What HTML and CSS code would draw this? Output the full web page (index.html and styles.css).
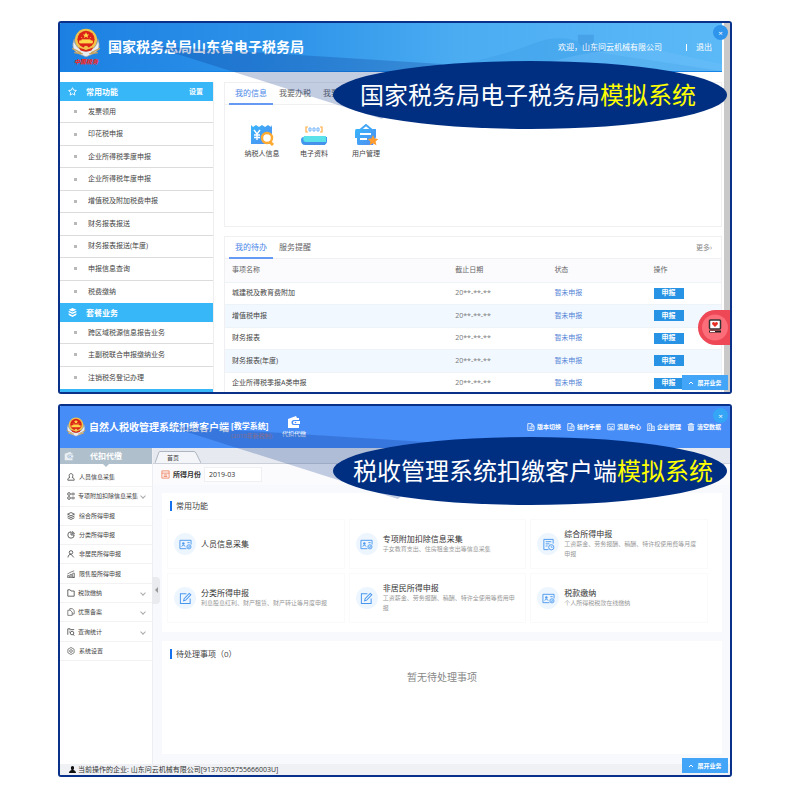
FILE: index.html
```html
<!DOCTYPE html>
<html lang="zh-CN">
<head>
<meta charset="utf-8">
<title>电子税务局模拟系统</title>
<link rel="stylesheet" href="styles.css">
</head>
<body>
<svg class="defs" aria-hidden="true">
  <symbol id="emblem" viewBox="0 0 28 28">
    <path d="M3 10Q-1 20 7 24L14 27 21 24Q29 20 25 10Q25 19 14 22Q3 19 3 10Z" fill="#e9ecf0" stroke="#8a93a0" stroke-width=".7"/>
    <path d="M1 19l8 4M27 19l-8 4M3 23l8 1M25 23l-8 1" stroke="#c8a35c" stroke-width="1.3"/>
    <circle cx="14" cy="11" r="10.300" fill="#f1c34b"/>
    <circle cx="14" cy="10.500" r="8" fill="#dc2318"/>
    <path d="M14 4l1 2h2l-1.600 1.400.6 2-2-1.200-2 1.200.6-2L11 6h2z" fill="#ffd84a"/>
    <path d="M8 14v-2h2v-1h8v1h2v2zM9.500 8.500l1 1M18.500 8.500l-1 1" fill="#ffd84a" stroke="#ffd84a" stroke-width=".7"/>
    <path d="M7 18q7 4 14 0l-2 3q-5 2-10 0z" fill="#d92a1b"/>
    <circle cx="14" cy="18.500" r="2" fill="#f1c34b"/>
  </symbol>
  <symbol id="wallet" viewBox="0 0 14 14"><path d="M1 4l8-3 1 2h2v2H7a2.500 2.500 0 0 0 0 5h5v3H1z" fill="currentColor"/><path d="M7.500 6H13v3H7.500a1.500 1.500 0 0 1 0-3z" fill="currentColor"/><circle cx="8.500" cy="7.500" r=".8" fill="#4a8df5"/></symbol>
  <symbol id="doc" viewBox="0 0 10 10"><path d="M1 .8h5L8.800 3.500v5.700H1zM6 1v3h2.500M3 5h4M3 7h4" fill="none" stroke="currentColor"/></symbol>
  <symbol id="mail" viewBox="0 0 10 10"><path d="M1 1.500h8v7H1zM2.500 4L5 5.500 7.500 4M3 7h4" fill="none" stroke="currentColor"/></symbol>
  <symbol id="building" viewBox="0 0 10 10"><path d="M1 9.200V1h4.500v8.200M5.500 4H9v5.200M0 9.200h10M2.500 3H4M2.500 5H4M2.500 7H4M7.200 5.500v2" fill="none" stroke="currentColor"/></symbol>
  <symbol id="trash" viewBox="0 0 10 10"><path d="M.8 2h8.400M3.300 2V.7h3.400V2M2 3.500v5.700h6V3.500z" fill="none" stroke="currentColor"/><path d="M2.500 4h5v5h-5z" fill="currentColor" opacity=".6"/></symbol>
  <symbol id="user" viewBox="0 0 10 10"><path d="M5 .8c3 0 2.700 3.700 1.200 4.700C9 6.500 9 7 9 9H1c0-2 0-2.500 2.800-3.500C2.300 4.500 2 .8 5 .8z" fill="none" stroke="currentColor"/></symbol>
  <symbol id="items" viewBox="0 0 10 10"><circle cx="2.500" cy="2.500" r="1.700" fill="none" stroke="currentColor"/><circle cx="2.500" cy="7.500" r="1.700" fill="none" stroke="currentColor"/><path d="M6 1.500h3v2H6zM6 6.500h3v2H6z" fill="none" stroke="currentColor" stroke-width=".8"/></symbol>
  <symbol id="layers" viewBox="0 0 10 10"><path d="M5 .7l4.300 2L5 4.800.7 2.700zM.7 5L5 7l4.300-2M.7 7.200L5 9.300l4.300-2.100" fill="none" stroke="currentColor"/></symbol>
  <symbol id="pie" viewBox="0 0 10 10"><path d="M5 1a4 4 0 1 0 4 4H5zM6.500.8A3.500 3.500 0 0 1 9.200 3.600H6.500z" fill="none" stroke="currentColor"/></symbol>
  <symbol id="person" viewBox="0 0 10 10"><circle cx="5" cy="3" r="2.200" fill="none" stroke="currentColor"/><path d="M1.200 9.300C1.500 6.500 3 5.300 5 5.300L8.500 9.300" fill="none" stroke="currentColor"/></symbol>
  <symbol id="chart" viewBox="0 0 10 10"><path d="M.8 9.200V7h2v2.200M4 9.200V5.500h2v3.700M7.200 9.200V4h2v5.200zM.5 5L5 2.500 9 1M.5 9.300h9" fill="none" stroke="currentColor" stroke-width=".8"/></symbol>
  <symbol id="folder" viewBox="0 0 10 10"><path d="M1 2.500V1h3l1 1.500h4V9H1z" fill="none" stroke="currentColor"/></symbol>
  <symbol id="copy" viewBox="0 0 10 10"><path d="M3.500 2.500V.8h3L9 3v4.500H6.500M1 2.800h3L6.500 5v4.200H1z" fill="none" stroke="currentColor" stroke-width=".8"/></symbol>
  <symbol id="search" viewBox="0 0 10 10"><path d="M1 8.500V1h3v2M2.500 5h1M7.500 8L9.300 9.500M5 2h4" fill="none" stroke="currentColor"/><circle cx="6.300" cy="6.300" r="2.200" fill="none" stroke="currentColor"/></symbol>
  <symbol id="gear" viewBox="0 0 10 10"><path d="M5 .6l3.900 2.200v4.400L5 9.400 1.100 7.200V2.800z" fill="none" stroke="currentColor" stroke-width=".8"/><circle cx="5" cy="5" r="1.700" fill="none" stroke="currentColor" stroke-width=".8"/></symbol>
  <symbol id="idcard" viewBox="0 0 14 14"><path d="M13 7V2.500H1v9h7M3 9.300c0-2 3.500-2 3.500 0M9 5h2.500" fill="none" stroke="currentColor"/><circle cx="4.700" cy="6" r="1.300" fill="currentColor"/><circle cx="10.700" cy="9.500" r="2.300" fill="#b9dcff" stroke="currentColor" stroke-width=".8"/><path d="M9.700 9.500l.8.8 1.300-1.500" fill="none" stroke="currentColor" stroke-width=".7"/></symbol>
  <symbol id="edit" viewBox="0 0 14 14"><path d="M8 2H1.500v10.500H12V7M5 9.500l.5-2.300L11 1.500 12.700 3 7.200 8.800z" fill="none" stroke="currentColor" stroke-width="1.100"/></symbol>
  <symbol id="report" viewBox="0 0 14 14"><path d="M12 6V1.500H2v11h5M4 4h6M4 6.300h4M4 8.600h2" fill="none" stroke="currentColor"/><circle cx="10" cy="10" r="2.800" fill="none" stroke="currentColor"/><path d="M10 8.500V10h1.500" fill="none" stroke="currentColor" stroke-width=".8"/></symbol>
</svg>

<main class="page">
<section class="window portal">
  <header class="portal-head">
    <svg class="scenery" viewBox="0 0 300 49" preserveAspectRatio="none" aria-hidden="true">
      <path d="M0 49Q75 36 110 21Q135 11 155 19L176 30 300 49Z" fill="#3f9fe9" opacity=".45"/>
      <path d="M100 49Q150 29 220 24L300 42V49Z" fill="#77c5fa" opacity=".3"/>
      <path d="M155 19V12h16v11l12 6h-20z" fill="#3c92dc" opacity=".5"/>
    </svg>
    <div class="logo">
      <svg class="emblem"><use href="#emblem"/></svg>
      <span class="logo-name">中国税务</span>
    </div>
    <h1>国家税务总局山东省电子税务局</h1>
    <p class="welcome">欢迎，山东问云机械有限公司</p>
    <a class="logout" href="#">退出</a>
  </header>

  <div class="portal-body">
    <nav class="side">
      <h2><svg viewBox="0 0 10 10"><path d="M5 .8l1.300 2.700 3 .4L7.100 6l.5 3L5 7.500 2.400 9l.5-3L.7 3.900l3-.4z" fill="none" stroke="currentColor"/></svg>常用功能<a href="#">设置</a></h2>
      <ul class="side-list">
        <li><a href="#">发票领用</a></li>
        <li><a href="#">印花税申报</a></li>
        <li><a href="#">企业所得税季度申报</a></li>
        <li><a href="#">企业所得税年度申报</a></li>
        <li><a href="#">增值税及附加税费申报</a></li>
        <li><a href="#">财务报表报送</a></li>
        <li><a href="#">财务报表报送(年度)</a></li>
        <li><a href="#">申报信息查询</a></li>
        <li><a href="#">税费缴纳</a></li>
      </ul>
      <h2><svg viewBox="0 0 10 10"><path d="M5 0l4.300 2L5 4 .7 2zM.7 3L5 5l4.300-2v1.600L5 6.800.7 4.600zM.7 5.700L5 8l4.300-2.300v2L5 10 .7 7.700z" fill="currentColor"/></svg>套餐业务</h2>
      <ul class="side-list short">
        <li><a href="#">跨区域税源信息报告业务</a></li>
        <li><a href="#">主副税联合申报缴纳业务</a></li>
        <li><a href="#">注销税务登记办理</a></li>
      </ul>
      <div class="side-end"></div>
    </nav>

    <div class="content">
      <section class="card info">
        <div class="tabs">
          <button class="tab active">我的信息</button>
          <button class="tab">我要办税</button>
          <button class="tab">我要查询</button>
        </div>
        <div class="shortcuts">
          <a href="#"><svg viewBox="0 0 26 22"><defs><linearGradient id="blue" x2="1" y2="1"><stop stop-color="#37b5fb"/><stop offset="1" stop-color="#528cef"/></linearGradient></defs><path d="M2 1l2 2 3-2 3 2 3-2 3 2 3-2 3 2 1-2v19H2z" fill="url(#blue)"/><path d="M5 6l3 4 3-4M8 10v6M5 11h6M5 13.500h6" fill="none" stroke="#fff" stroke-width="1.400"/><circle cx="18" cy="14" r="5" fill="#fff" stroke="#ffab32" stroke-width="2.500"/><path d="M21 18l3 3" stroke="#ffab32" stroke-width="3"/></svg>纳税人信息</a>
          <a href="#"><svg viewBox="0 0 26 22"><path d="M7 3H5v5h2M19 3h2v5h-2" fill="none" stroke="#ffae43" stroke-width="1.200"/><path d="M8 4h2v3H8zM12 4h2v3h-2zM16 4h2v3h-2z" fill="none" stroke="#73b5fa"/><path d="M3 13q-3 0-3 3 0 5 4 5h19q3-1 3-4v-4z" fill="#4099ed"/><path d="M3 12h22v6H4q-3-2-1-6z" fill="#5be1e9"/><path d="M2 18h22v3H5z" fill="#4592ec"/></svg>电子资料</a>
          <a href="#"><svg viewBox="0 0 26 22"><path d="M7 6l6-5 6 5" fill="none" stroke="#46a7f6" stroke-width="2"/><path d="M3 5h20v8l-3 8H5q-1 0-1-2v-5H2V8q0-3 1-3z" fill="url(#blue)"/><path d="M7 10h11M7 15h7" stroke="#fff" stroke-width="1.800"/><path d="M20 11l1.600 3.500 3.800.4-2.800 2.500.8 3.800-3.400-2-3.400 2 .8-3.800-2.800-2.500 3.800-.4z" fill="#ff9c2d"/></svg>用户管理</a>
        </div>
      </section>

      <section class="card todo">
        <div class="tabs">
          <button class="tab active">我的待办</button>
          <button class="tab">服务提醒</button>
          <a class="more" href="#">更多›</a>
        </div>
        <table>
          <thead><tr><th class="wide">事项名称</th><th class="mid">截止日期</th><th class="mid">状态</th><th>操作</th></tr></thead>
          <tbody>
            <tr><td>城建税及教育费附加</td><td class="date">20**-**-**</td><td class="state">暂未申报</td><td><button class="file-btn">申报</button></td></tr>
            <tr><td>增值税申报</td><td class="date">20**-**-**</td><td class="state">暂未申报</td><td><button class="file-btn">申报</button></td></tr>
            <tr><td>财务报表</td><td class="date">20**-**-**</td><td class="state">暂未申报</td><td><button class="file-btn">申报</button></td></tr>
            <tr><td>财务报表(年度)</td><td class="date">20**-**-**</td><td class="state">暂未申报</td><td><button class="file-btn">申报</button></td></tr>
            <tr><td>企业所得税季报A类申报</td><td class="date">20**-**-**</td><td class="state">暂未申报</td><td><button class="file-btn">申报</button></td></tr>
          </tbody>
        </table>
      </section>
    </div>
  </div>
  <div class="scrollbar"></div>
  <svg class="beam" viewBox="0 0 300 90" aria-hidden="true"><path d="M0 2L290 20 230 75Z"/></svg>
  <p class="callout">国家税务局电子税务局<em>模拟系统</em></p>
  <button class="close" aria-label="关闭">×</button>
  <button class="service" aria-label="客服"><svg viewBox="0 0 32 35"><circle cx="17" cy="17.500" r="13" fill="#fb6d79"/><rect x="11.500" y="10" width="11" height="9" rx="1" fill="#fff" stroke="#333" stroke-width="1.500"/><path d="M17 17l-3-3q0-2 1.500-2 1 0 1.500 1 .5-1 1.500-1Q20 12 20 14z" fill="#e62f24"/><path d="M11 21.500h12" stroke="#222" stroke-width="2"/><path d="M12 21.500h5" stroke="#fff"/></svg></button>
  <button class="expand"><svg viewBox="0 0 6 6"><path d="M1 4l2-2 2 2" fill="none" stroke="currentColor"/></svg>展开业务</button>
</section>

<section class="window client">
  <header class="client-head">
    <svg class="emblem small"><use href="#emblem"/></svg>
    <h1>自然人税收管理系统扣缴客户端</h1>
    <div class="edition"><strong>[教学系统]</strong><span>(2019年新税制)</span></div>
    <a class="module" href="#"><svg><use href="#wallet"/></svg>代扣代缴</a>
    <nav class="tools">
      <a href="#"><svg><use href="#doc"/></svg>版本切换</a>
      <a href="#"><svg><use href="#doc"/></svg>操作手册</a>
      <a href="#"><svg><use href="#mail"/></svg>消息中心</a>
      <a href="#"><svg><use href="#building"/></svg>企业管理</a>
      <a href="#"><svg><use href="#trash"/></svg>清空数据</a>
    </nav>
  </header>

  <div class="client-body">
    <nav class="menu">
      <h2><svg><use href="#wallet"/></svg><span>代扣代缴</span></h2>
      <ul>
        <li><a href="#"><svg><use href="#user"/></svg>人员信息采集</a></li>
        <li><a href="#" class="sub"><svg><use href="#items"/></svg>专项附加扣除信息采集</a></li>
        <li><a href="#"><svg><use href="#layers"/></svg>综合所得申报</a></li>
        <li><a href="#"><svg><use href="#pie"/></svg>分类所得申报</a></li>
        <li><a href="#"><svg><use href="#person"/></svg>非居民所得申报</a></li>
        <li><a href="#"><svg><use href="#chart"/></svg>限售股所得申报</a></li>
        <li><a href="#" class="sub"><svg><use href="#folder"/></svg>税款缴纳</a></li>
        <li><a href="#" class="sub"><svg><use href="#copy"/></svg>优惠备案</a></li>
        <li><a href="#" class="sub"><svg><use href="#search"/></svg>查询统计</a></li>
        <li><a href="#"><svg><use href="#gear"/></svg>系统设置</a></li>
      </ul>
      <button class="collapse" aria-label="收起菜单"></button>
    </nav>

    <div class="workspace">
      <div class="tabstrip">
        <svg class="tab-shape" viewBox="0 0 46 12" preserveAspectRatio="none" aria-hidden="true"><path d="M0 12L4 1Q4 .5 5 .5H39Q40 .5 41 2L46 12" fill="#f3f5f8" stroke="#aeb6c1"/></svg>
        <a href="#">首页</a>
      </div>
      <div class="period">
        <svg viewBox="0 0 10 10"><path d="M1 1h8v8H1zM1 3.500h8M3 5.500h4M3 7.200h4" fill="none" stroke="#ef8664"/></svg>
        <label for="month">所得月份</label>
        <input id="month" value="2019-03">
      </div>
      <div class="panels">
        <section class="panel functions">
          <h3>常用功能</h3>
          <div class="grid">
            <a href="#"><i><svg><use href="#idcard"/></svg></i><span><b>人员信息采集</b></span></a>
            <a href="#"><i><svg><use href="#idcard"/></svg></i><span><b>专项附加扣除信息采集</b><small>子女教育支出、住房租金支出等信息采集</small></span></a>
            <a href="#"><i><svg><use href="#report"/></svg></i><span><b>综合所得申报</b><small>工资薪金、劳务报酬、稿酬、特许权使用费等月度申报</small></span></a>
            <a href="#"><i><svg><use href="#edit"/></svg></i><span><b>分类所得申报</b><small>利息股息红利、财产租赁、财产转让等月度申报</small></span></a>
            <a href="#"><i><svg><use href="#edit"/></svg></i><span><b>非居民所得申报</b><small>工资薪金、劳务报酬、稿酬、特许全使用等费用申报</small></span></a>
            <a href="#"><i><svg><use href="#idcard"/></svg></i><span><b>税款缴纳</b><small>个人所得税税款在线缴纳</small></span></a>
          </div>
        </section>
        <section class="panel pending">
          <h3>待处理事项（0）</h3>
          <p>暂无待处理事项</p>
        </section>
      </div>
    </div>
  </div>
  <footer><svg viewBox="0 0 8 8"><path d="M4 0c2.500 0 2 3.500 1 4.500C7 5.300 8 6 8 8H0c0-2 1-2.700 3-3.500C2 3.500 1.500 0 4 0z" fill="#111"/></svg>当前操作的企业: 山东问云机械有限公司[91370305755666003U]</footer>
  <svg class="beam" viewBox="0 0 300 90" aria-hidden="true"><path d="M0 2L290 20 230 75Z"/></svg>
  <p class="callout">税收管理系统扣缴客户端<em>模拟系统</em></p>
  <button class="close" aria-label="关闭">×</button>
  <button class="expand"><svg viewBox="0 0 6 6"><path d="M1 4l2-2 2 2" fill="none" stroke="currentColor"/></svg>展开业务</button>
</section>
</main>
</body>
</html>
```
FILE: styles.css
```css
* { box-sizing: border-box; }
body, h1, h2, h3, p, ul { margin: 0; padding: 0; }
body {
  background: #fff;
  color: #444;
  font: 7px/10px "Open Sans", "Noto Sans CJK SC", sans-serif;
}
ul { list-style: none; }
a { color: inherit; text-decoration: none; }
button, input { font: inherit; color: inherit; border: 0; padding: 0; background: none; }
svg { flex: none; }
.defs { position: absolute; width: 0; height: 0; }

.page {
  display: flex;
  flex-direction: column;
  gap: 10px;
  padding: 21px 58px;
}
.window {
  position: relative;
  border: 2px solid #09318a;
  border-radius: 3px;
  overflow: hidden;
  background: #fff;
}
.emblem { width: 30px; height: 30px; }

/* portal */
.portal { padding-right: 8px; }
.portal-head {
  position: relative;
  display: flex;
  align-items: center;
  min-height: 49px;
  padding: 0 10px 0 11px;
  border-bottom: 1px solid #1684e6;
  background: linear-gradient(90deg, #1b80e2 0%, #2e94e9 35%, #4bacf2 60%, #5bb9f7 100%);
  color: #fff;
}
.scenery { position: absolute; right: 0; top: 0; width: 45%; height: 100%; }
.logo {
  display: flex;
  flex-direction: column;
  align-items: center;
  width: 30px;
  margin-right: 7px;
}
.logo-name {
  color: #ed2b28;
  font-size: 6px;
  line-height: 8px;
  font-weight: 900;
  font-style: italic;
}
.portal-head h1 { font-size: 14px; line-height: 20px; font-weight: 700; }
.welcome { position: relative; margin-left: auto; font-size: 8px; }
.logout {
  position: relative;
  margin-left: 24px;
  padding-left: 10px;
  font-size: 8px;
}
.logout::before {
  content: "";
  position: absolute;
  left: 0;
  top: 2px;
  height: 7px;
  border-left: 1px solid #fff;
}
.portal-body { display: flex; gap: 10px; padding-top: 10px; }
.side { flex: 0 0 154px; border-right: 1px solid #eee; }
.side h2 {
  display: flex;
  align-items: center;
  gap: 9px;
  height: 19px;
  padding: 0 10px 0 8px;
  background: #37b6f8;
  color: #fff;
  font-size: 8px;
  font-weight: 700;
}
.side h2 svg { width: 9px; height: 9px; }
.side h2 a { margin-left: auto; font-size: 7px; }
.side-list { display: grid; grid-auto-rows: 1fr; min-height: 202px; }
.side-list.short { min-height: 67px; }
.side-list li {
  display: flex;
  align-items: center;
  gap: 11px;
  padding-left: 14px;
  border-bottom: 1px solid #dcdcdc;
}
.side-list li:last-child { border-bottom: 0; }
.side-list li::before { content: ""; width: 3px; height: 3px; background: #b9b9b9; }
.side-end { height: 3px; background: #37b6f8; }

.content { flex: 1; display: flex; flex-direction: column; gap: 9px; min-width: 0; }
.card { border: 1px solid #f0f0f2; }
.info { min-height: 145px; }
.todo { flex: 1 1 0; min-height: 0; overflow: hidden; border-bottom: 0; }
.tabs { display: flex; align-items: center; height: 22px; padding: 0 4px; border-bottom: 1px solid #f0f0f2; }
.tab { width: 44px; height: 22px; font-size: 8px; color: #666; border-bottom: 2px solid transparent; }
.tab.active { color: #4c87e8; border-color: #669af2; }
.more { margin-left: auto; padding-right: 5px; color: #888; }
.shortcuts { display: flex; gap: 2px; padding: 19px 12px; }
.shortcuts a {
  display: flex;
  flex-direction: column;
  align-items: center;
  gap: 3px;
  width: 50px;
}
.shortcuts svg { width: 26px; height: 22px; }

table { width: 100%; height: 136px; border-collapse: collapse; table-layout: fixed; }
th, td { padding: 0 0 0 7px; text-align: left; font-weight: 400; border-bottom: 1px solid #eef3f8; }
th { height: 23px; background: #fbfbfe; color: #666; }
.wide { width: 45%; }
.mid { width: 20%; }
tbody tr:nth-child(even) { background: #f1f8ff; }
.date { color: #777; }
.state { color: #5283d6; }
.file-btn { display: block; width: 30px; height: 11px; background: #2893e4; color: #fff; font-weight: 700; }
.scrollbar { position: absolute; top: 0; right: 0; bottom: 0; width: 6px; background: #c9c9c9; }

/* overlays */
.beam { position: absolute; left: 92px; top: 21px; width: 300px; height: 90px; fill: #09318a; opacity: .24; }
.callout {
  position: absolute;
  right: 3px;
  top: 38px;
  display: flex;
  align-items: center;
  justify-content: center;
  width: 394px;
  height: 68px;
  padding: 0 4px 3px 0;
  border-radius: 50%;
  background: #002f82;
  color: #fff;
  font: 24px/34px "Noto Sans CJK SC", sans-serif;
  white-space: nowrap;
}
.callout em { color: #ff0; font-style: normal; }
.close {
  position: absolute;
  right: 2px;
  top: 2px;
  width: 15px;
  height: 15px;
  border-radius: 50%;
  background: #2f94ec;
  color: #fff;
  font-size: 8px;
}
.service {
  position: absolute;
  right: 0;
  bottom: 47px;
  width: 32px;
  height: 35px;
  border-radius: 18px 0 0 18px;
  background: #ee4755;
}
.service svg { display: block; width: 32px; height: 35px; }
.expand {
  position: absolute;
  right: 2px;
  bottom: 2px;
  display: flex;
  align-items: center;
  justify-content: center;
  gap: 3px;
  width: 46px;
  height: 15px;
  background: #42a5f8;
  color: #fff;
  font-size: 6px;
  font-weight: 700;
}
.expand svg { width: 6px; height: 6px; }

/* client */
.client .callout { top: 31px; padding: 0 0 3px 6px; }
.client .beam { left: 108px; top: 18px; }
.client .close { background: #35a5f5; }
.client-head {
  display: flex;
  align-items: center;
  min-height: 42px;
  padding: 0 9px 0 6px;
  background: #468df7;
  color: #fff;
}
.emblem.small { width: 20px; height: 22px; margin-right: 3px; }
.client-head h1 { font-size: 10px; line-height: 14px; font-weight: 700; }
.edition { margin: 8px 0 0 2px; width: 48px; white-space: nowrap; }
.edition strong, .edition span { display: block; }
.edition strong { font-size: 8px; }
.edition span { font-size: 6px; color: #b5828a; }
.module { display: flex; flex-direction: column; align-items: center; font-size: 6px; margin-left: 3px; }
.module svg { width: 14px; height: 14px; }
.tools { display: flex; gap: 6px; margin-left: auto; font-size: 6px; font-weight: 700; }
.tools a { display: flex; align-items: center; gap: 2px; }
.tools svg { width: 8px; height: 8px; }
.client-body { display: flex; min-height: 316px; }
.menu { position: relative; flex: 0 0 93px; min-width: 0; border-right: 1px solid #eceef2; }
.menu h2 {
  position: relative;
  display: flex;
  align-items: center;
  height: 16px;
  padding-left: 4px;
  background: #afbfcb;
  color: #fff;
  font-size: 8px;
  font-weight: 700;
}
.menu h2 svg { width: 10px; height: 10px; color: #e8eef2; }
.menu h2 span { margin-left: 16px; }
.menu h2::after {
  content: "";
  position: absolute;
  left: 43px;
  top: 16px;
  border: 3px solid transparent;
  border-top-color: #afbfcb;
}
.menu ul { display: grid; grid-auto-rows: 1fr; min-height: 193px; margin-top: 4px; }
.menu li { display: grid; border-bottom: 1px solid #f2f2f4; }
.menu li a { display: flex; align-items: center; gap: 4px; padding: 0 8px 0 7px; font-size: 6px; white-space: nowrap; }
.menu li svg { width: 8px; height: 8px; }
.sub::after {
  content: "";
  flex: none;
  width: 3px;
  height: 3px;
  margin-left: auto;
  border: solid #aaa;
  border-width: 0 1px 1px 0;
  transform: rotate(45deg);
}
.menu li a.sub { gap: 3px; }
.collapse {
  position: absolute;
  right: -8px;
  top: 129px;
  width: 8px;
  height: 27px;
  border-radius: 0 4px 4px 0;
  background: #e9ebef;
}
.collapse::before {
  content: "";
  position: absolute;
  left: 0;
  top: 10px;
  border: 3px solid transparent;
  border-right-color: #999;
}
.workspace { flex: 1; min-width: 0; display: flex; flex-direction: column; background: #f8f9fc; }
.tabstrip {
  position: relative;
  display: flex;
  align-items: flex-end;
  height: 16px;
  border-bottom: 1px solid #ccd1d9;
  background: #e6eaf0;
}
.tab-shape { width: 46px; height: 12px; margin-left: 2px; }
.tabstrip a { position: absolute; left: 14px; bottom: 0; font-size: 6px; }
.period { display: flex; align-items: center; gap: 3px; height: 21px; padding-left: 8px; background: #fbfbfd; color: #333; }
.period svg { width: 9px; height: 9px; }
.period label { font-weight: 700; }
.period input { width: 58px; height: 15px; padding-left: 4px; border: 1px solid #f0f0f4; background: #fff; }
.panels { flex: 1; display: flex; flex-direction: column; gap: 9px; padding: 8px 8px 10px 9px; }
.panel { background: #fff; }
.panel h3 { padding-left: 4px; border-left: 2px solid #1672ef; font-size: 8px; line-height: 10px; font-weight: 400; color: #444; }
.functions { flex: 0 0 138px; padding: 8px 14px 9px 8px; }
.functions h3 { margin-bottom: 8px; }
.grid { display: grid; grid-template-columns: repeat(3, 1fr); grid-auto-rows: 50px; gap: 4px; margin-left: -3px; }
.grid a { display: flex; align-items: center; gap: 5px; padding: 0 6px; border: 1px solid #fafafb; }
.grid i { flex: none; display: grid; place-items: center; width: 22px; height: 22px; border-radius: 50%; background: #edf6ff; color: #4a97ee; }
.grid i svg { width: 13px; height: 13px; }
.grid b { display: block; font-size: 8px; font-weight: 400; color: #333; }
.grid small { display: block; font-size: 6px; color: #999; }
.pending { flex: 1; padding: 8px; }
.pending p { margin-top: 11px; font-size: 10px; line-height: 14px; text-align: center; color: #888; }
footer { display: flex; align-items: center; gap: 2px; height: 11px; padding-left: 9px; background: #eff1f4; color: #333; }
footer svg { width: 7px; height: 7px; }
```
